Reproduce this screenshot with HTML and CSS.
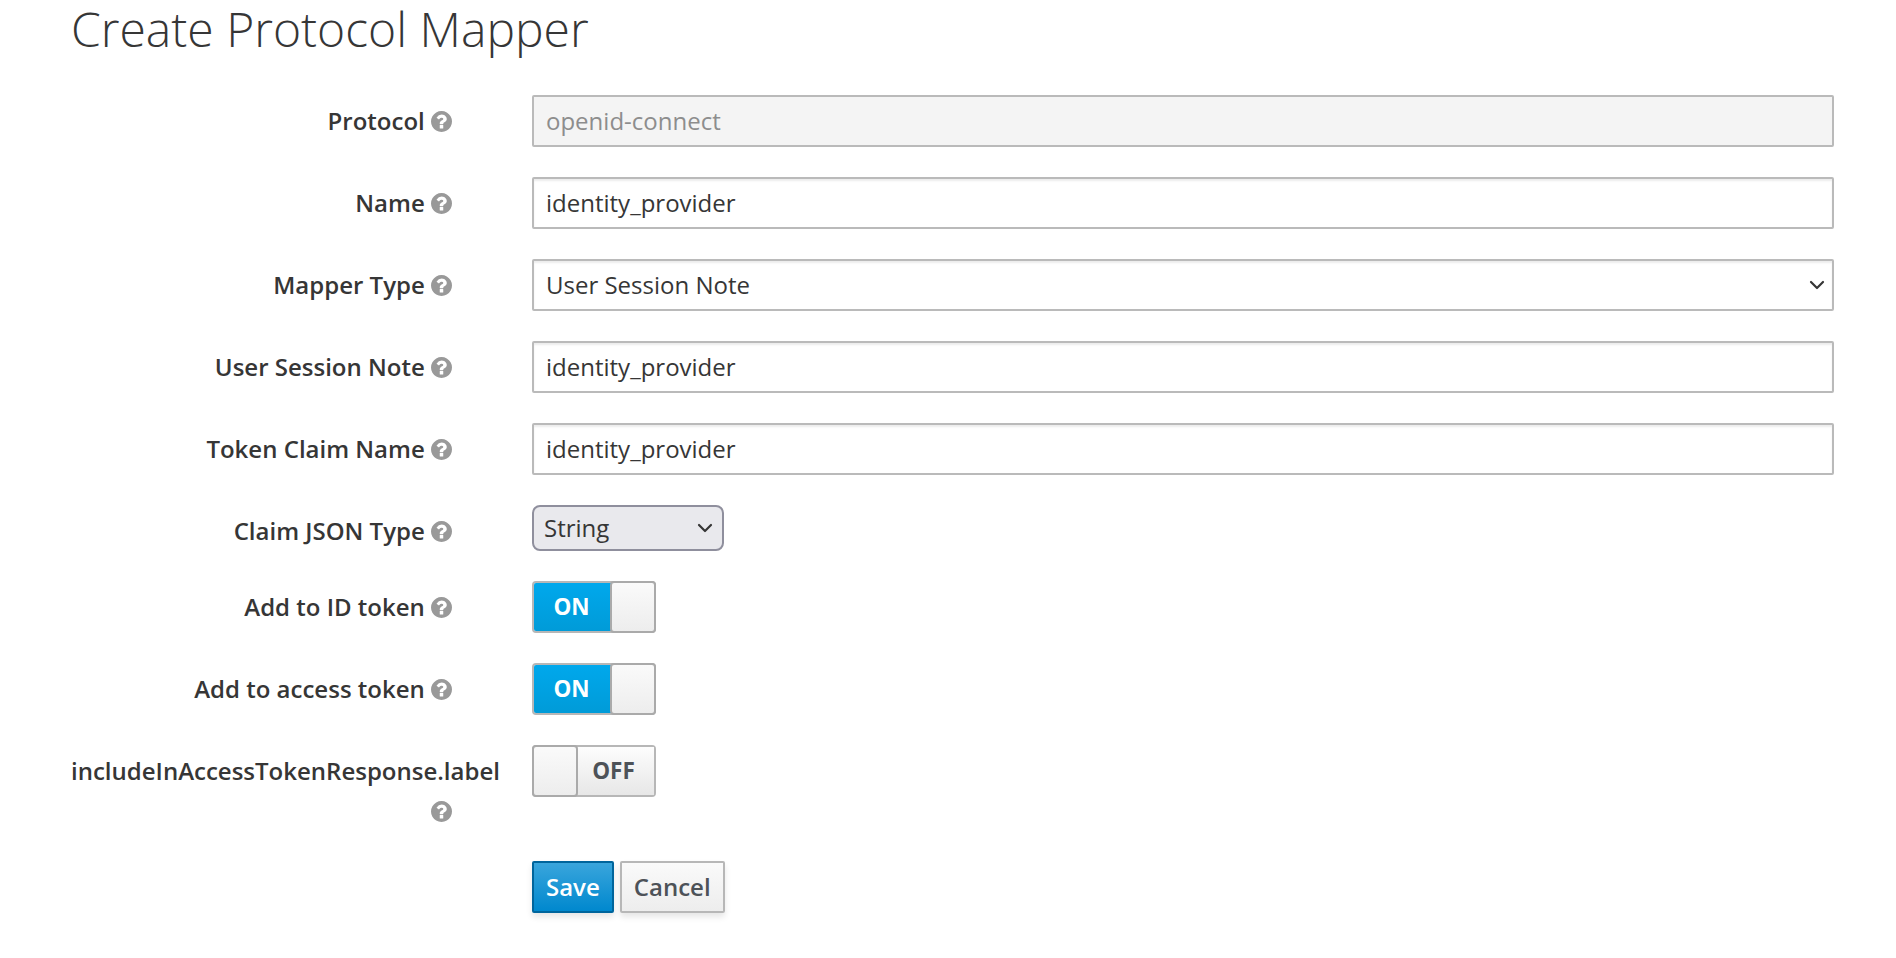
FILE: index.html
```html
<!DOCTYPE html>
<html lang="en">
<head>
<meta charset="utf-8">
<title>Create Protocol Mapper</title>
<link rel="stylesheet" href="styles.css">
</head>
<body>
<svg width="0" height="0" class="defs">
  <symbol id="help" viewBox="0 0 1536 1536">
    <path d="M896 1248v-192q0-14-9-23t-23-9H672q-14 0-23 9t-9 23v192q0 14 9 23t23 9h192q14 0 23-9t9-23zm256-672q0-88-55.500-163T958 297t-170-41q-243 0-371 213-15 24 8 42l132 100q7 6 19 6 16 0 25-12 53-68 86-92 34-24 86-24 48 0 85.500 26t37.500 59q0 38-20 61t-68 45q-63 28-115.500 86.500T640 892v36q0 14 9 23t23 9h192q14 0 23-9t9-23q0-19 21.500-49.500T972 829q32-18 49-28.500t46-35 44.500-48 28-60.500 12.500-81zm384 192q0 209-103 385.500T1153.500 1433 768 1536t-385.500-103T103 1153.500 0 768t103-385.500T382.500 103 768 0t385.500 103T1433 382.500 1536 768z"/>
  </symbol>
  <symbol id="chevron" viewBox="0 0 16 10">
    <path d="M2 2l6 6 6-6" fill="none" stroke="#363636" stroke-width="2.200" stroke-linecap="round" stroke-linejoin="round"/>
  </symbol>
</svg>
<main class="page">
  <h1 class="title">Create Protocol Mapper</h1>
  <form class="form">
    <div class="row">
      <label class="label">Protocol <svg class="help"><use href="#help"/></svg></label>
      <div class="field disabled">openid-connect</div>
    </div>
    <div class="row">
      <label class="label">Name <svg class="help"><use href="#help"/></svg></label>
      <div class="field">identity_provider</div>
    </div>
    <div class="row">
      <label class="label">Mapper Type <svg class="help"><use href="#help"/></svg></label>
      <div class="field">User Session Note<svg class="chevron"><use href="#chevron"/></svg></div>
    </div>
    <div class="row">
      <label class="label">User Session Note <svg class="help"><use href="#help"/></svg></label>
      <div class="field">identity_provider</div>
    </div>
    <div class="row">
      <label class="label">Token Claim Name <svg class="help"><use href="#help"/></svg></label>
      <div class="field">identity_provider</div>
    </div>
    <div class="row">
      <label class="label">Claim JSON Type <svg class="help"><use href="#help"/></svg></label>
      <div class="select">String<svg class="chevron"><use href="#chevron"/></svg></div>
    </div>
    <div class="row">
      <label class="label">Add to ID token <svg class="help"><use href="#help"/></svg></label>
      <div class="toggle on"><span class="state">ON</span><span class="handle"></span></div>
    </div>
    <div class="row">
      <label class="label">Add to access token <svg class="help"><use href="#help"/></svg></label>
      <div class="toggle on"><span class="state">ON</span><span class="handle"></span></div>
    </div>
    <div class="row">
      <label class="label">includeInAccessTokenResponse.label <svg class="help"><use href="#help"/></svg></label>
      <div class="toggle off"><span class="handle"></span><span class="state">OFF</span></div>
    </div>
    <div class="actions">
      <button type="button" class="btn primary">Save</button>
      <button type="button" class="btn">Cancel</button>
    </div>
  </form>
</main>
</body>
</html>
```
FILE: styles.css
```css
* { box-sizing: border-box; }
body {
  margin: 0;
  height: 958px;
  overflow: hidden;
  background: #fff;
  color: #363636;
  font: 24px/40px "Open Sans", sans-serif;
}
.defs { display: block; }
.page { padding: 0 62px 0 71px; }
.title {
  margin: 0;
  height: 95px;
  font-size: 48px;
  font-weight: 320;
  line-height: 58px;
}
.form { display: flex; flex-direction: column; gap: 30px; }
.row {
  display: grid;
  grid-template-columns: 381px 1302px;
  column-gap: 80px;
  align-items: start;
}
.label {
  padding-top: 6px;
  height: 46px;
  font-weight: 600;
  text-align: right;
}
.row:nth-child(9) .label { height: 86px; }
.help {
  display: inline-block;
  width: 21px;
  height: 21px;
  vertical-align: -2px;
  fill: #999;
}
.field {
  display: flex;
  align-items: center;
  justify-content: space-between;
  height: 52px;
  padding: 0 7px 0 12px;
  border: 2px solid #bababa;
  border-radius: 2px;
  box-shadow: inset 0 2px 2px rgba(0, 0, 0, .075);
}
.field.disabled {
  background: #f4f4f4;
  color: #8d8d8d;
  box-shadow: none;
}
.chevron { width: 16px; height: 10px; }
.select {
  display: flex;
  align-items: center;
  justify-content: space-between;
  width: 192px;
  height: 46px;
  padding: 0 9px 0 10px;
  border: 2px solid #8f8f9d;
  border-radius: 8px;
  background: #e9e9ed;
}
.toggle {
  display: flex;
  width: 124px;
  height: 52px;
  border: 2px solid #b7b7b7;
  border-radius: 4px;
  font-size: 22.5px;
  font-weight: 700;
  line-height: 47px;
}
.state { flex: 1; padding-right: 3px; text-align: center; }
.handle {
  z-index: 1;
  width: 46px;
  height: 52px;
  margin: -2px;
  border: 2px solid #aaa;
  border-radius: 4px;
  background: linear-gradient(#fafafa, #ededed);
}
.on .state {
  border-radius: 2px 0 0 2px;
  background: linear-gradient(#00a8ec, #009bd8);
  color: #fff;
}
.off .state {
  background: linear-gradient(#fdfdfd, #e7e7e7);
  color: #4d5258;
}
.actions { display: flex; gap: 6px; padding-left: 461px; }
.btn {
  height: 52px;
  padding: 0 12px;
  border: 2px solid #b7b7b7;
  border-radius: 2px;
  background: linear-gradient(#fafafa, #ededed);
  box-shadow: 0 4px 6px rgba(3, 3, 3, .1);
  color: #4d5258;
  font: 600 24px/48px "Open Sans", sans-serif;
}
.btn.primary {
  border-color: #00659c;
  background: linear-gradient(#39a5dc, #0088ce);
  color: #fff;
}
```
